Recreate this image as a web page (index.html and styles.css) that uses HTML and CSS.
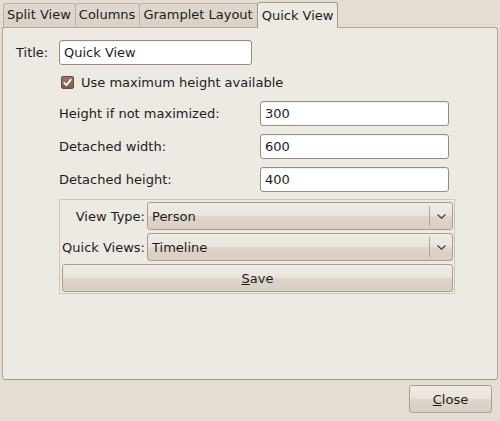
FILE: index.html
```html
<!DOCTYPE html>
<html lang="en">
<head>
    <meta charset="UTF-8">
    <title>Quick View</title>
    <link rel="stylesheet" href="styles.css">
</head>
<body>
    <div class="window">
        <div class="tabs">
            <div class="tab">Split View</div>
            <div class="tab">Columns</div>
            <div class="tab">Gramplet Layout</div>
            <div class="tab active">Quick View</div>
        </div>

        <div class="panel">
            <div class="title-row">
                <label class="title-label">Title:</label>
                <div class="entry title-entry">Quick View</div>
            </div>

            <div class="section">
                <div class="check-row">
                    <span class="checkbox">
                        <svg width="13" height="13" viewBox="0 0 13 13">
                            <path d="M3.2 6.8 L5.4 9.2 L9.8 3.6" fill="none" stroke="#fff" stroke-width="1.8" stroke-linecap="round" stroke-linejoin="round"/>
                        </svg>
                    </span>
                    <span>Use maximum height available</span>
                </div>

                <div class="fields">
                    <label>Height if not maximized:</label>
                    <div class="entry">300</div>
                    <label>Detached width:</label>
                    <div class="entry">600</div>
                    <label>Detached height:</label>
                    <div class="entry">400</div>
                </div>

                <div class="frame">
                    <div class="combo-row">
                        <label>View Type:</label>
                        <div class="combo">
                            <span class="combo-text">Person</span>
                            <span class="combo-arrow">
                                <svg width="11" height="7" viewBox="0 0 11 7">
                                    <path d="M1.5 1.5 L5.5 5.2 L9.5 1.5" fill="none" stroke="#3c3c3c" stroke-width="1.2"/>
                                </svg>
                            </span>
                        </div>
                    </div>
                    <div class="combo-row">
                        <label>Quick Views:</label>
                        <div class="combo">
                            <span class="combo-text">Timeline</span>
                            <span class="combo-arrow">
                                <svg width="11" height="7" viewBox="0 0 11 7">
                                    <path d="M1.5 1.5 L5.5 5.2 L9.5 1.5" fill="none" stroke="#3c3c3c" stroke-width="1.2"/>
                                </svg>
                            </span>
                        </div>
                    </div>
                    <button class="btn save-btn"><u>S</u>ave</button>
                </div>
            </div>
        </div>

        <div class="actions">
            <button class="btn close-btn"><u>C</u>lose</button>
        </div>
    </div>
</body>
</html>
```

FILE: styles.css
```css
body {
    margin: 0;
    background-color: #e4ddd3;
    font-family: "DejaVu Sans", sans-serif;
    font-size: 13px;
    color: #1c1c1c;
}
.window {
    width: 500px;
    height: 421px;
    display: flex;
    flex-direction: column;
}
.tabs {
    display: flex;
    align-items: flex-end;
    padding: 2px 0 0 3px;
    height: 25px;
}
.tab {
    height: 23px;
    line-height: 22px;
    padding: 0 4px 0 3px;
    border: 1px solid #bdb1a3;
    border-bottom: none;
    border-radius: 3px 3px 0 0;
    background: linear-gradient(#e0d9cf, #d9d1c6);
    margin-right: -1px;
}
.tab.active {
    height: 25px;
    line-height: 25px;
    background: #ede9e3;
    border-color: #a89a8b;
    position: relative;
    top: 1px;
    padding: 0 4px 0 4px;
    margin-left: 0;
}
.panel {
    margin: 0 2px 0 2px;
    height: 351px;
    background-color: #ede9e3;
    border: 1px solid #b3a595;
    border-bottom-color: #a89a8b;
    border-radius: 0 3px 3px 3px;
}
.title-row {
    display: flex;
    align-items: center;
    padding: 12px 0 0 13px;
}
.title-label {
    width: 43px;
}
.entry {
    box-sizing: border-box;
    height: 25px;
    line-height: 23px;
    padding: 0 4px;
    background-color: #fff;
    border: 1px solid #9b8b7b;
    border-radius: 3px;
    box-shadow: inset 0 1px 1px rgba(0, 0, 0, 0.06);
}
.title-entry {
    width: 193px;
}
.section {
    padding-left: 56px;
}
.check-row {
    display: flex;
    align-items: center;
    height: 18px;
    margin-top: 8px;
    padding-left: 2px;
}
.checkbox {
    width: 13px;
    height: 13px;
    border-radius: 2px;
    background: linear-gradient(#9a7663, #7e5c4b);
    border: 1px solid #6a4a3b;
    box-sizing: border-box;
    margin-right: 7px;
    display: flex;
    align-items: center;
    justify-content: center;
}
.checkbox svg {
    flex: none;
}
.fields {
    display: grid;
    grid-template-columns: 201px 189px;
    row-gap: 8px;
    align-items: center;
    margin-top: 10px;
}
.frame {
    margin-top: 7px;
    width: 396px;
    box-sizing: border-box;
    border: 1px solid #cfc5b9;
    padding: 2px 1px 1px 2px;
    display: flex;
    flex-direction: column;
    gap: 3px;
}
.combo-row {
    display: flex;
    align-items: center;
}
.combo-row label {
    box-sizing: border-box;
    width: 85px;
    text-align: right;
    padding-right: 2px;
    white-space: nowrap;
}
.combo {
    flex: 1;
    box-sizing: border-box;
    height: 28px;
    display: flex;
    align-items: center;
    border: 1px solid #ab9e8f;
    border-radius: 3px;
    background: linear-gradient(#f0ebe5 0%, #ebe5de 45%, #ddd5cb 55%, #d8d0c5 100%);
}
.combo-text {
    flex: 1;
    padding-left: 4px;
}
.combo-arrow {
    width: 22px;
    height: 20px;
    border-left: 1px solid #b1a596;
    display: flex;
    align-items: center;
    justify-content: center;
}
.btn {
    font-family: "DejaVu Sans", sans-serif;
    font-size: 13px;
    color: #1c1c1c;
    box-sizing: border-box;
    border: 1px solid #ab9e8f;
    border-radius: 3px;
    background: linear-gradient(#f0ebe5 0%, #ebe5de 45%, #ddd5cb 55%, #d8d0c5 100%);
    padding: 0;
    cursor: pointer;
}
.save-btn {
    height: 28px;
}
.actions {
    display: flex;
    justify-content: flex-end;
    padding: 5px 8px 0 0;
}
.close-btn {
    width: 83px;
    height: 28px;
}
```
